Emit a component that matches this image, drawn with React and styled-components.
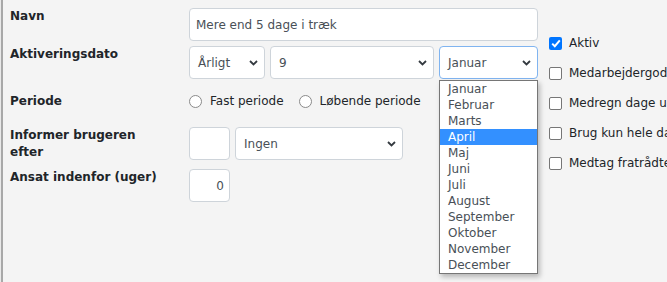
import React from "react"
import styled, { createGlobalStyle } from 'styled-components'

const GlobalStyle = createGlobalStyle`
    html, body {
        margin: 0;
        padding: 0;
        background: #e9e9e9;
        overflow: hidden;
    }
    body {
        font-family: 'DejaVu Sans', Verdana, sans-serif;
        font-size: 12px;
    }
`;

const Page = styled.div`
    margin-left: 1px;
    border-left: 2px solid #a8a8a8;
    background: #f4f4f4;
    height: 282px;
    display: flex;
    padding-left: 7px;
    box-sizing: border-box;
`;

const Form = styled.div`
    display: flex;
    flex-direction: column;
    padding-top: 8px;
    width: 528px;
    flex-shrink: 0;
`;

const Row = styled.div`
    display: flex;
    align-items: ${props => props.center ? 'center' : 'flex-start'};
    min-height: ${props => props.height || 33}px;
    margin-bottom: ${props => props.gap || 0}px;
`;

const Label = styled.div`
    width: 154px;
    margin-right: 25px;
    flex-shrink: 0;
    font-weight: bold;
    line-height: 17px;
    color: #212529;
`;

const Controls = styled.div`
    display: flex;
    gap: ${props => props.gap || 5}px;
    align-items: center;
`;

const TextInput = styled.div`
    box-sizing: border-box;
    width: ${props => props.width}px;
    height: 33px;
    background: #fff;
    border: 1px solid #ced4da;
    border-radius: 4px;
    padding: 0 ${props => props.right ? '5px' : '6px'};
    display: flex;
    align-items: center;
    justify-content: ${props => props.right ? 'flex-end' : 'flex-start'};
    color: #495057;
`;

const Select = styled.div`
    position: relative;
    box-sizing: border-box;
    width: ${props => props.width}px;
    height: 33px;
    background: #fff;
    border: 1px solid ${props => props.focused ? '#80b4f0' : '#ced4da'};
    border-radius: 4px;
    padding: 0 6px 0 8px;
    display: flex;
    align-items: center;
    justify-content: space-between;
    color: #495057;
`;

const Chevron = () => (
    <svg width="9" height="6" viewBox="0 0 9 6">
        <path d="M1 1 L4.5 4.5 L8 1" fill="none" stroke="#343a40" strokeWidth="1.8" />
    </svg>
);

const Options = styled.ul`
    position: absolute;
    top: 33px;
    left: -1px;
    width: 99px;
    box-sizing: border-box;
    margin: 0;
    padding: 0;
    list-style: none;
    background: #fff;
    border: 1px solid #767676;
    box-shadow: 2px 3px 5px rgba(0, 0, 0, 0.25);
    z-index: 5;
`;

const Option = styled.li`
    height: 16px;
    line-height: 16px;
    padding-left: 8px;
    background: ${props => props.selected ? '#3390ff' : 'transparent'};
    color: ${props => props.selected ? '#fff' : '#495057'};
`;

const RadioLabel = styled.label`
    display: flex;
    align-items: center;
    color: #212529;
    margin-right: 10px;
`;

const RadioCircle = styled.span`
    width: 13px;
    height: 13px;
    box-sizing: border-box;
    border: 1px solid #8a8a8a;
    border-radius: 50%;
    background: #fff;
    margin-right: 8px;
`;

const Side = styled.div`
    margin-left: 11px;
    padding-top: 28px;
    display: flex;
    flex-direction: column;
    white-space: nowrap;
`;

const Check = styled.div`
    height: 30px;
    display: flex;
    align-items: center;
    color: #212529;
`;

const Box = styled.span`
    width: 13px;
    height: 13px;
    box-sizing: border-box;
    border-radius: 2px;
    border: ${props => props.checked ? 'none' : '1px solid #767676'};
    background: ${props => props.checked ? '#0075ff' : '#fff'};
    margin-right: 7px;
    display: flex;
    align-items: center;
    justify-content: center;
    flex-shrink: 0;
`;

const months = ['Januar', 'Februar', 'Marts', 'April', 'Maj', 'Juni', 'Juli', 'August', 'September', 'Oktober', 'November', 'December']

const checks = [
    { text: 'Aktiv', checked: true },
    { text: 'Medarbejdergodkendelse', checked: false },
    { text: 'Medregn dage uden registrering', checked: false },
    { text: 'Brug kun hele dage', checked: false },
    { text: 'Medtag fratrådte medarbejdere', checked: false },
]

export default function App() {
    return (
        <Page>
            <GlobalStyle />
            <Form>
                <Row gap={5}>
                    <Label>Navn</Label>
                    <TextInput width={349}>Mere end 5 dage i træk</TextInput>
                </Row>
                <Row gap={5}>
                    <Label>Aktiveringsdato</Label>
                    <Controls>
                        <Select width={76}>Årligt<Chevron /></Select>
                        <Select width={164}>9<Chevron /></Select>
                        <Select width={99} focused>
                            Januar<Chevron />
                            <Options>
                                {months.map(m => (
                                    <Option key={m} selected={m === 'April'}>{m}</Option>
                                ))}
                            </Options>
                        </Select>
                    </Controls>
                </Row>
                <Row center height={34} gap={9}>
                    <Label>Periode</Label>
                    <Controls gap={0}>
                        <RadioLabel><RadioCircle />Fast periode</RadioLabel>
                        <RadioLabel><RadioCircle />Løbende periode</RadioLabel>
                    </Controls>
                </Row>
                <Row gap={8}>
                    <Label>Informer brugeren efter</Label>
                    <Controls>
                        <TextInput width={41} />
                        <Select width={168}>Ingen<Chevron /></Select>
                    </Controls>
                </Row>
                <Row>
                    <Label>Ansat indenfor (uger)</Label>
                    <TextInput width={41} right>0</TextInput>
                </Row>
            </Form>
            <Side>
                {checks.map(c => (
                    <Check key={c.text}>
                        <Box checked={c.checked}>
                            {c.checked && (
                                <svg width="10" height="9" viewBox="0 0 10 9">
                                    <path d="M1.2 4.6 L3.8 7.2 L8.8 1.4" fill="none" stroke="#fff" strokeWidth="2" />
                                </svg>
                            )}
                        </Box>
                        {c.text}
                    </Check>
                ))}
            </Side>
        </Page>
    );
}
